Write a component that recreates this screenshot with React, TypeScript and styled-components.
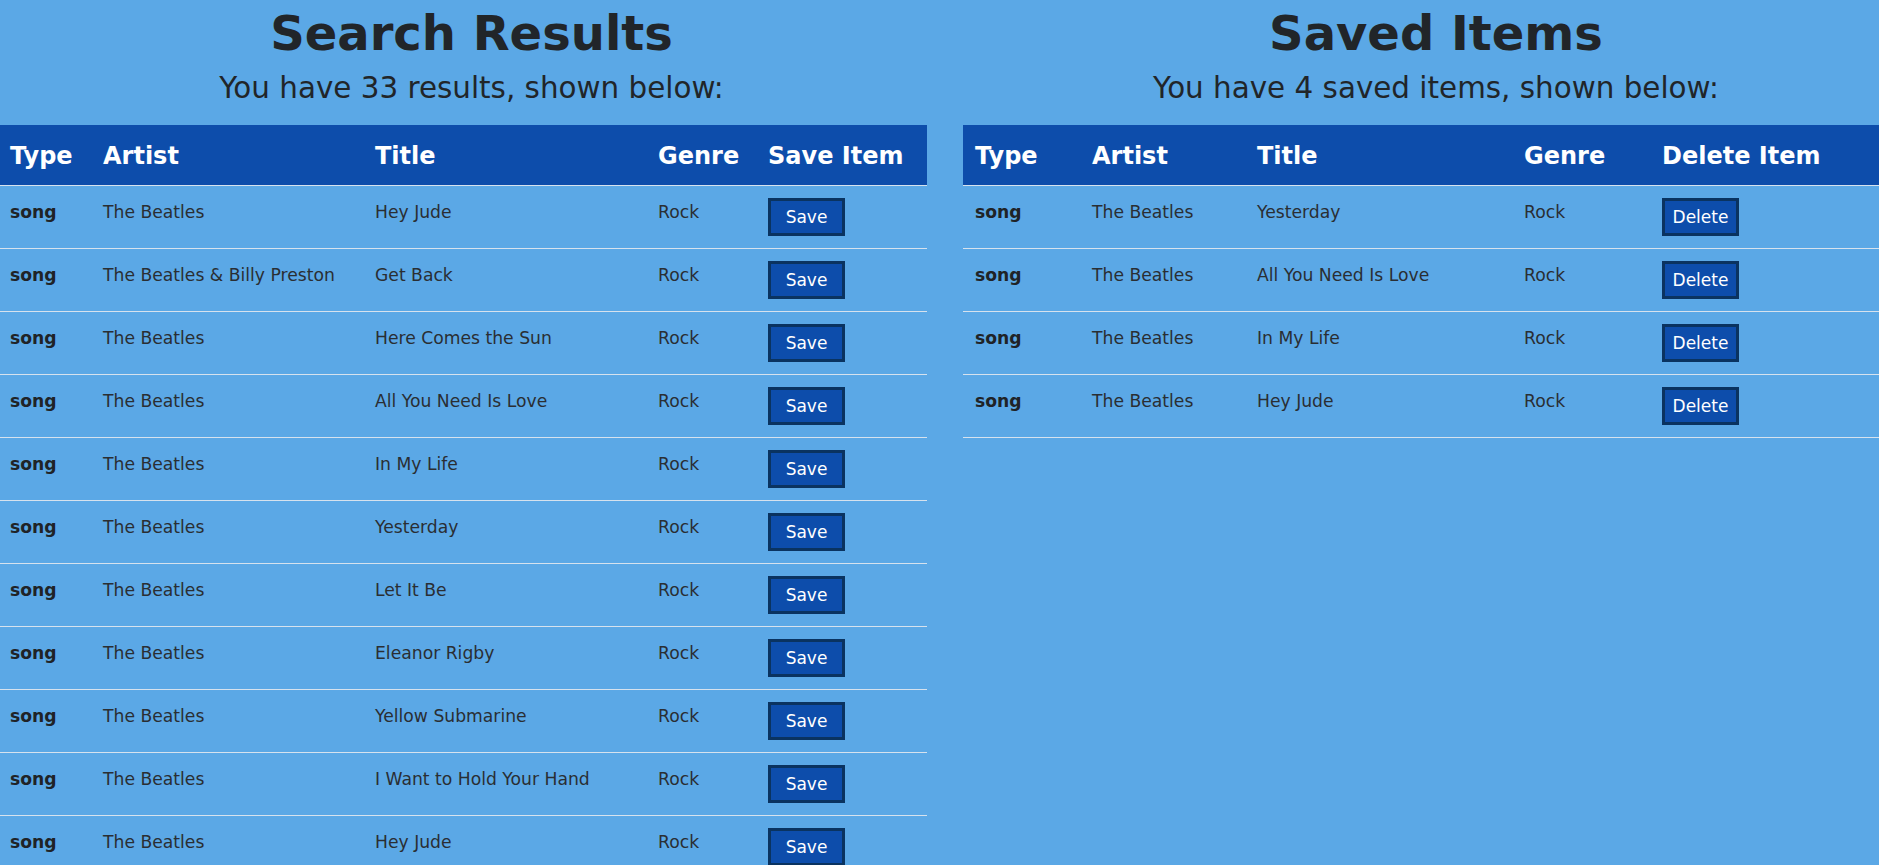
import React from "react";
import styled, { createGlobalStyle } from "styled-components";

const GlobalStyle = createGlobalStyle`
  html, body {
    margin: 0;
    padding: 0;
    overflow: hidden;
    background: #5ba8e6;
  }
  body {
    font-family: "DejaVu Sans", Verdana, sans-serif;
    color: #212529;
  }
`;

const Page = styled.div`
  display: grid;
  grid-template-columns: 943px 946px;
  column-gap: 20px;
  align-items: start;
  width: 1909px;
`;

const Column = styled.section`
  display: flex;
  flex-direction: column;
  align-items: center;
`;

const Title = styled.h1`
  margin: 5px 0 0;
  font-size: 48px;
  font-weight: bold;
  line-height: normal;
  color: #212529;
`;

const Subtitle = styled.p`
  margin: 10px 0 20px;
  font-size: 29.4px;
  line-height: normal;
  color: #212529;
`;

const Table = styled.table<{ $pad: number }>`
  align-self: flex-start;
  width: 927px;
  border-collapse: collapse;
  table-layout: fixed;

  & th,
  & td {
    padding-left: ${(p) => p.$pad}px;
  }
`;

const HeadRow = styled.tr`
  background: #0d4dab;
  border-bottom: 1px solid #d6e2ee;
`;

const HeadCell = styled.th<{ $w?: number }>`
  box-sizing: border-box;
  width: ${(p) => (p.$w ? `${p.$w}px` : "auto")};
  height: 60px;
  padding: 2px 4px 0 10px;
  text-align: left;
  vertical-align: middle;
  color: #ffffff;
  font-size: 24px;
  font-weight: bold;
  white-space: nowrap;
`;

const Row = styled.tr`
  border-bottom: 1px solid #d6e2ee;
`;

const Cell = styled.td<{ $bold?: boolean }>`
  box-sizing: border-box;
  height: 62px;
  padding: 12px 4px 12px 10px;
  vertical-align: top;
  font-size: 17.2px;
  line-height: 28px;
  font-weight: ${(p) => (p.$bold ? "bold" : "normal")};
  color: ${(p) => (p.$bold ? "#1f2327" : "#2a2e33")};
  white-space: nowrap;
`;

const ActionButton = styled.button`
  display: flex;
  align-items: center;
  justify-content: center;
  box-sizing: border-box;
  width: 77px;
  height: 38px;
  padding: 0;
  background: #0d4dab;
  border: 3px solid #0a3360;
  color: #ffffff;
  font-family: "DejaVu Sans", Verdana, sans-serif;
  font-size: 17px;
  cursor: pointer;
`;

type Item = { artist: string; title: string };

const results: Item[] = [
  { artist: "The Beatles", title: "Hey Jude" },
  { artist: "The Beatles & Billy Preston", title: "Get Back" },
  { artist: "The Beatles", title: "Here Comes the Sun" },
  { artist: "The Beatles", title: "All You Need Is Love" },
  { artist: "The Beatles", title: "In My Life" },
  { artist: "The Beatles", title: "Yesterday" },
  { artist: "The Beatles", title: "Let It Be" },
  { artist: "The Beatles", title: "Eleanor Rigby" },
  { artist: "The Beatles", title: "Yellow Submarine" },
  { artist: "The Beatles", title: "I Want to Hold Your Hand" },
  { artist: "The Beatles", title: "Hey Jude" },
  { artist: "The Beatles", title: "Come Together" },
];

const saved: Item[] = [
  { artist: "The Beatles", title: "Yesterday" },
  { artist: "The Beatles", title: "All You Need Is Love" },
  { artist: "The Beatles", title: "In My Life" },
  { artist: "The Beatles", title: "Hey Jude" },
];

type PanelProps = {
  heading: string;
  summary: string;
  items: Item[];
  actionHeader: string;
  actionLabel: string;
  widths: number[];
  pad: number;
};

function Panel({ heading, summary, items, actionHeader, actionLabel, widths, pad }: PanelProps) {
  return (
    <Column>
      <Title>{heading}</Title>
      <Subtitle>{summary}</Subtitle>
      <Table $pad={pad}>
        <thead>
          <HeadRow>
            <HeadCell $w={widths[0]}>Type</HeadCell>
            <HeadCell $w={widths[1]}>Artist</HeadCell>
            <HeadCell $w={widths[2]}>Title</HeadCell>
            <HeadCell $w={widths[3]}>Genre</HeadCell>
            <HeadCell>{actionHeader}</HeadCell>
          </HeadRow>
        </thead>
        <tbody>
          {items.map((it, i) => (
            <Row key={i}>
              <Cell $bold>song</Cell>
              <Cell>{it.artist}</Cell>
              <Cell>{it.title}</Cell>
              <Cell>Rock</Cell>
              <Cell>
                <ActionButton type="button">{actionLabel}</ActionButton>
              </Cell>
            </Row>
          ))}
        </tbody>
      </Table>
    </Column>
  );
}

export default function App() {
  return (
    <>
      <GlobalStyle />
      <Page>
        <Panel
          heading="Search Results"
          summary="You have 33 results, shown below:"
          items={results}
          actionHeader="Save Item"
          actionLabel="Save"
          widths={[93, 272, 283, 110]}
          pad={10}
        />
        <Panel
          heading="Saved Items"
          summary="You have 4 saved items, shown below:"
          items={saved}
          actionHeader="Delete Item"
          actionLabel="Delete"
          widths={[117, 165, 267, 138]}
          pad={12}
        />
      </Page>
    </>
  );
}
